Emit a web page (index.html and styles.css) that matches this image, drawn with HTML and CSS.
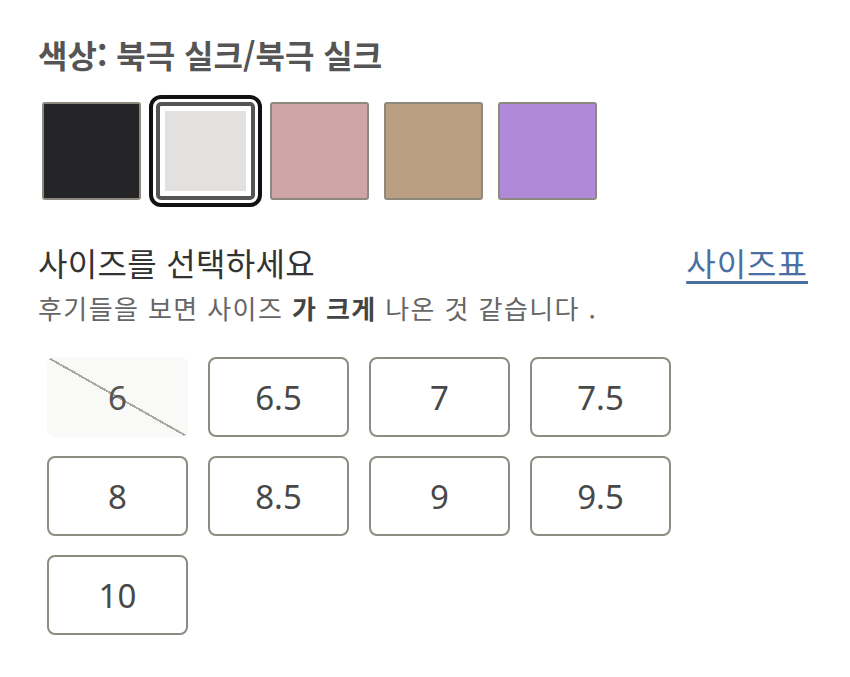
FILE: index.html
```html
<!DOCTYPE html>
<html lang="ko">
<head>
<meta charset="utf-8">
<link rel="stylesheet" href="styles.css">
</head>
<body>
<div class="panel">
  <h2 class="color-title">색상: 북극 실크/북극 실크</h2>
  <div class="swatches">
    <div class="swatch sw-black"></div>
    <div class="swatch sw-white selected"><div class="fill"></div></div>
    <div class="swatch sw-pink"></div>
    <div class="swatch sw-tan"></div>
    <div class="swatch sw-purple"></div>
  </div>
  <div class="size-head">
    <span class="size-title">사이즈를 선택하세요</span>
    <a class="size-link" href="#">사이즈표</a>
  </div>
  <p class="size-note">후기들을 보면 사이즈 <b>가 크게</b> 나온 것 같습니다 .</p>
  <div class="sizes">
    <div class="size disabled">6</div>
    <div class="size">6.5</div>
    <div class="size">7</div>
    <div class="size">7.5</div>
    <div class="size">8</div>
    <div class="size">8.5</div>
    <div class="size">9</div>
    <div class="size">9.5</div>
    <div class="size">10</div>
  </div>
</div>
</body>
</html>
```
FILE: styles.css
```css
html, body {
  margin: 0;
  padding: 0;
  background: #ffffff;
}
body {
  font-family: "Noto Sans", "Noto Sans CJK KR", sans-serif;
  color: #333;
}
.panel {
  padding: 32px 0 0 38px;
  width: 770px;
}
.color-title {
  margin: 0;
  font-size: 32px;
  line-height: 44px;
  font-weight: 700;
  color: #555;
  font-family: "Noto Sans CJK KR", sans-serif;
}
.swatches {
  display: flex;
  gap: 15px;
  margin: 26px 0 0 4px;
}
.swatch {
  width: 99px;
  height: 98px;
  box-sizing: border-box;
  border: 2px solid #8e897f;
  border-radius: 3px;
}
.sw-black { background: #252528; }
.sw-pink { background: #cfa5a5; }
.sw-tan { background: #bc9f83; }
.sw-purple { background: #b08ad9; }
.swatch.selected {
  border: 4px solid #555;
  padding: 5px;
  background: #fff;
  outline: 4px solid #111;
  outline-offset: 3px;
  border-radius: 5px;
}
.swatch.selected .fill {
  width: 100%;
  height: 100%;
  background: #e2e1e0;
}
.size-head {
  display: flex;
  justify-content: space-between;
  align-items: baseline;
  margin-top: 40px;
}
.size-title {
  font-family: "Noto Sans CJK KR", sans-serif;
  font-size: 32px;
  line-height: 44px;
  color: #333;
  letter-spacing: 0.3px;
}
.size-link {
  font-family: "Noto Sans CJK KR", sans-serif;
  font-size: 32px;
  line-height: 44px;
  color: #4a6fa3;
  letter-spacing: 1px;
  text-decoration: underline;
  text-decoration-thickness: 3px;
  text-underline-offset: 5px;
}
.size-note {
  margin: 7px 0 0;
  font-family: "Noto Sans CJK KR", sans-serif;
  font-size: 26px;
  line-height: 34px;
  letter-spacing: 1.4px;
  color: #666;
}
.size-note b {
  color: #444;
}
.sizes {
  display: grid;
  grid-template-columns: repeat(4, 141px);
  grid-auto-rows: 80px;
  column-gap: 20px;
  row-gap: 19px;
  margin: 32px 0 0 9px;
}
.size {
  box-sizing: border-box;
  border: 2px solid #8e8b82;
  border-radius: 8px;
  display: flex;
  align-items: center;
  justify-content: center;
  font-size: 33px;
  color: #484848;
  font-family: "Noto Sans", sans-serif;
}
.size.disabled {
  border: none;
  background: #f9f9f7 linear-gradient(to top right, transparent calc(50% - 1px), #aaa8a2 calc(50% - 1px), #aaa8a2 calc(50% + 1px), transparent calc(50% + 1px));
  color: #555;
}
```
